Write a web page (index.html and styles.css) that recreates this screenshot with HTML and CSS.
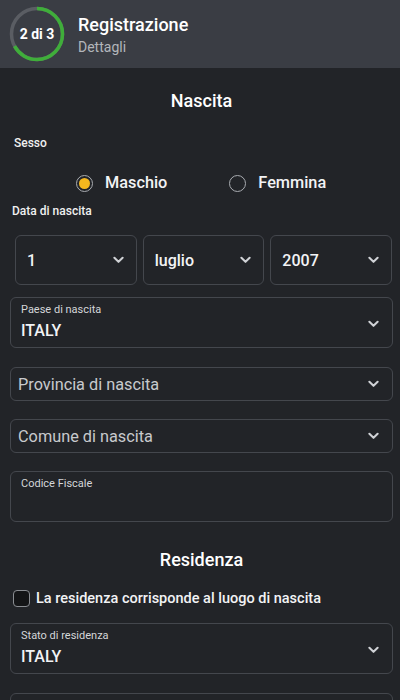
FILE: index.html
```html
<!DOCTYPE html>
<html lang="it">
<head>
<meta charset="utf-8">
<title>Registrazione</title>
<link rel="stylesheet" href="styles.css">
</head>
<body>
<header class="topbar">
  <div class="step">
    <svg class="ring" viewBox="0 0 56 56" width="56" height="56">
      <circle cx="28" cy="28" r="25.5" fill="none" stroke="#5a5d63" stroke-width="3.5"/>
      <circle cx="28" cy="28" r="25.5" fill="none" stroke="#3fae3a" stroke-width="3.5" stroke-dasharray="106.8 200" transform="rotate(-90 28 28)"/>
    </svg>
    <span class="step-text">2 di 3</span>
  </div>
  <div class="titles">
    <div class="title">Registrazione</div>
    <div class="subtitle">Dettagli</div>
  </div>
</header>

<main class="content">
  <h2 class="section">Nascita</h2>

  <div class="label sesso">Sesso</div>
  <div class="radios">
    <label class="radio"><span class="dot on"></span>Maschio</label>
    <label class="radio"><span class="dot"></span>Femmina</label>
  </div>

  <div class="label data">Data di nascita</div>
  <div class="date-row">
    <div class="select"><span>1</span><svg class="chev" viewBox="0 0 12 8"><path d="M1.5 1.5 6 6 10.5 1.5" fill="none" stroke="#d0d2d6" stroke-width="2.2" stroke-linecap="round" stroke-linejoin="round"/></svg></div>
    <div class="select"><span>luglio</span><svg class="chev" viewBox="0 0 12 8"><path d="M1.5 1.5 6 6 10.5 1.5" fill="none" stroke="#d0d2d6" stroke-width="2.2" stroke-linecap="round" stroke-linejoin="round"/></svg></div>
    <div class="select"><span>2007</span><svg class="chev" viewBox="0 0 12 8"><path d="M1.5 1.5 6 6 10.5 1.5" fill="none" stroke="#d0d2d6" stroke-width="2.2" stroke-linecap="round" stroke-linejoin="round"/></svg></div>
  </div>

  <div class="field tall paese">
    <div class="inner">
      <div class="flabel">Paese di nascita</div>
      <div class="fvalue">ITALY</div>
    </div>
    <svg class="chev" viewBox="0 0 12 8"><path d="M1.5 1.5 6 6 10.5 1.5" fill="none" stroke="#d0d2d6" stroke-width="2.2" stroke-linecap="round" stroke-linejoin="round"/></svg>
  </div>

  <div class="field short prov">
    <div class="placeholder">Provincia di nascita</div>
    <svg class="chev" viewBox="0 0 12 8"><path d="M1.5 1.5 6 6 10.5 1.5" fill="none" stroke="#d0d2d6" stroke-width="2.2" stroke-linecap="round" stroke-linejoin="round"/></svg>
  </div>

  <div class="field short">
    <div class="placeholder">Comune di nascita</div>
    <svg class="chev" viewBox="0 0 12 8"><path d="M1.5 1.5 6 6 10.5 1.5" fill="none" stroke="#d0d2d6" stroke-width="2.2" stroke-linecap="round" stroke-linejoin="round"/></svg>
  </div>

  <div class="field tall text">
    <div class="inner">
      <div class="flabel">Codice Fiscale</div>
    </div>
  </div>

  <h2 class="section res">Residenza</h2>

  <label class="check"><span class="box"></span>La residenza corrisponde al luogo di nascita</label>

  <div class="field tall stato">
    <div class="inner">
      <div class="flabel">Stato di residenza</div>
      <div class="fvalue">ITALY</div>
    </div>
    <svg class="chev" viewBox="0 0 12 8"><path d="M1.5 1.5 6 6 10.5 1.5" fill="none" stroke="#d0d2d6" stroke-width="2.2" stroke-linecap="round" stroke-linejoin="round"/></svg>
  </div>

  <div class="field tall last"></div>
</main>
</body>
</html>
```

FILE: styles.css
```css
* { box-sizing: border-box; }
html, body { margin: 0; padding: 0; }
body {
  background: #222428;
  color: #f2f3f5;
  font-family: Roboto, "Noto Sans", "Liberation Sans", sans-serif;
  width: 400px;
  height: 700px;
  overflow: hidden;
}
.topbar {
  height: 68px;
  background: #3a3d44;
  display: flex;
  align-items: center;
  padding-left: 9px;
  gap: 13px;
}
.step {
  position: relative;
  width: 56px;
  height: 56px;
  flex: none;
}
.ring { display: block; }
.step-text {
  position: absolute;
  inset: 0;
  display: flex;
  align-items: center;
  justify-content: center;
  font-size: 14px;
  font-weight: 700;
  color: #fff;
}
.titles { display: flex; flex-direction: column; margin-top: 2px; }
.title { font-size: 18px; font-weight: 500; color: #fff; line-height: 22px; }
.subtitle { font-size: 14px; color: #b3b6bb; line-height: 18px; margin-top: 2px; }

.content { padding: 0 7px 0 10px; }
.section {
  margin: 0;
  text-align: center;
  font-size: 18px;
  font-weight: 500;
  line-height: 22px;
  padding-top: 22px;
  color: #fff;
}
.label { font-size: 12px; font-weight: 500; color: #f0f0f0; line-height: 14px; }
.sesso { margin-top: 24px; padding-left: 4px; }
.radios {
  display: flex;
  padding-left: 66px;
  gap: 62px;
  margin-top: 23px;
}
.radio {
  display: flex;
  align-items: center;
  gap: 12px;
  font-size: 16.3px;
  font-weight: 500;
  line-height: 20px;
}
.dot {
  width: 17px;
  height: 17px;
  border: 1.5px solid #a9acb1;
  border-radius: 50%;
  display: inline-block;
  position: relative;
}
.dot.on::after {
  content: "";
  position: absolute;
  inset: 2px;
  border-radius: 50%;
  background: #f4b71e;
}
.data { margin-top: 11px; padding-left: 2px; }
.date-row {
  display: flex;
  gap: 6px;
  margin-top: 17px;
  padding-left: 5px;
  padding-right: 1px;
}
.select {
  flex: 1;
  height: 50px;
  border: 1.5px solid #44474d;
  border-radius: 6px;
  display: flex;
  align-items: center;
  justify-content: space-between;
  padding: 0 12px 0 11px;
  font-size: 16px;
  font-weight: 500;
}
.chev { width: 11px; height: 8px; flex: none; }
.field {
  border: 1.5px solid #44474d;
  border-radius: 6px;
  display: flex;
  align-items: center;
  justify-content: space-between;
  padding: 0 13px 0 10px;
  margin-top: 12px;
}
.field.tall { height: 51px; align-items: flex-start; }
.field.tall .chev { margin-top: 22px; }
.field.short { height: 34px; margin-top: 18px; }
.field.prov { margin-top: 19px; }
.field.text { margin-top: 18px; }
.inner { padding-top: 5px; }
.flabel { font-size: 11px; color: #d4d6d9; line-height: 13px; }
.fvalue { font-size: 16px; font-weight: 500; color: #f2f3f5; line-height: 20px; margin-top: 5px; }
.placeholder { font-size: 16.3px; color: #c8cacd; padding-left: 0; margin-left: -3px; }
.res { padding-top: 27px; }
.check {
  display: flex;
  align-items: center;
  gap: 6px;
  margin-top: 19px;
  padding-left: 3px;
  font-size: 14.5px;
  font-weight: 500;
}
.box {
  width: 17px;
  height: 17px;
  border: 1.5px solid #8a8d92;
  border-radius: 4px;
  background: #141517;
  display: inline-block;
  flex: none;
}
.field.stato { margin-top: 16px; height: 51px; }
.field.last { margin-top: 19px; }
```
